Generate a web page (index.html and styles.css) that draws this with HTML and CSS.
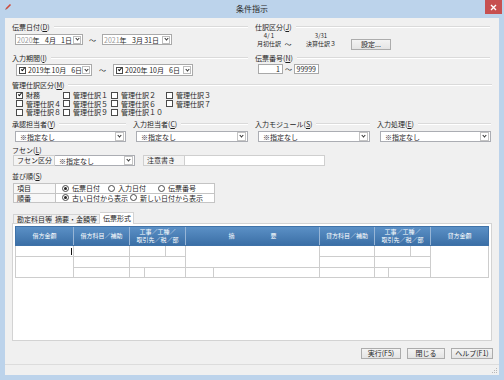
FILE: index.html
```html
<!DOCTYPE html>
<html lang="ja">
<head>
    <meta charset="UTF-8">
    <title>条件指示</title>
    <link rel="stylesheet" href="styles.css">
</head>
<body>
    <div class="window">
        <div class="titlebar">
            <span class="app-icon">
                <svg width="7" height="7" viewBox="0 0 7 7"><path d="M1 6 L5.5 1.5" stroke="#d04a3a" stroke-width="1.6"/><path d="M0.5 6.5 L1.5 5.5" stroke="#777" stroke-width="1"/></svg>
            </span>
            <span class="title">条件指示</span>
            <span class="close">
                <svg width="7" height="7" viewBox="0 0 7 7"><path d="M1 1 L6 6 M6 1 L1 6" stroke="#fff" stroke-width="1.4"/></svg>
            </span>
        </div>

        <div class="client">
            <div class="top">
                <div class="top-left">
                    <div class="glabel">伝票日付(<u>D</u>)</div>
                    <div class="date-row r1">
                        <div class="date w68">
                            <span class="dy gray">2020<b>年</b></span><span class="dm">4月</span><span class="dd">1日</span>
                            <span class="drop"><i class="chev"></i></span>
                        </div>
                        <span class="tilde t19">～</span>
                        <div class="date w70">
                            <span class="dy gray">2021<b>年</b></span><span class="dm">3月</span><span class="dd">31日</span>
                            <span class="drop"><i class="chev"></i></span>
                        </div>
                    </div>
                    <div class="glabel mt8">入力期間(<u>I</u>)</div>
                    <div class="date-row r2">
                        <div class="date w76 tall">
                            <span class="cb on"></span>
                            <span class="dy">2019年</span><span class="dm">10月</span><span class="dd">6日</span>
                            <span class="drop"><i class="chev"></i></span>
                        </div>
                        <span class="tilde t21">～</span>
                        <div class="date w80 tall">
                            <span class="cb on"></span>
                            <span class="dy">2020年</span><span class="dm">10月</span><span class="dd">6日</span>
                            <span class="drop"><i class="chev"></i></span>
                        </div>
                    </div>
                </div>

                <div class="top-right">
                    <div class="glabel">仕訳区分(<u>J</u>)</div>
                    <div class="kubun">
                        <div class="kb-col kb-a"><span>4/ 1</span><span>月初仕訳</span></div>
                        <span class="kb-tilde">～</span>
                        <div class="kb-col kb-b"><span>3/31</span><span>決算仕訳３</span></div>
                        <button class="btn set">設定...</button>
                    </div>
                    <div class="glabel mt4">伝票番号(<u>N</u>)</div>
                    <div class="num-row">
                        <span class="num">1</span>
                        <span class="tilde t11">～</span>
                        <span class="num">99999</span>
                    </div>
                </div>
            </div>

            <div class="glabel mt4">管理仕訳区分(<u>M</u>)</div>
            <div class="chk-grid">
                <label class="chk"><span class="cb on"></span>財務</label>
                <label class="chk"><span class="cb"></span>管理仕訳１</label>
                <label class="chk"><span class="cb"></span>管理仕訳２</label>
                <label class="chk"><span class="cb"></span>管理仕訳３</label>
                <label class="chk"><span class="cb"></span>管理仕訳４</label>
                <label class="chk"><span class="cb"></span>管理仕訳５</label>
                <label class="chk"><span class="cb"></span>管理仕訳６</label>
                <label class="chk"><span class="cb"></span>管理仕訳７</label>
                <label class="chk"><span class="cb"></span>管理仕訳８</label>
                <label class="chk"><span class="cb"></span>管理仕訳９</label>
                <label class="chk"><span class="cb"></span>管理仕訳１０</label>
            </div>

            <div class="sel-groups">
                <div class="sel-group">
                    <div class="glabel">承認担当者(<u>Y</u>)</div>
                    <div class="select">※指定なし<span class="arrow"><i class="chev"></i></span></div>
                </div>
                <div class="sel-group">
                    <div class="glabel">入力担当者(<u>C</u>)</div>
                    <div class="select">※指定なし<span class="arrow"><i class="chev"></i></span></div>
                </div>
                <div class="sel-group">
                    <div class="glabel">入力モジュール(<u>S</u>)</div>
                    <div class="select">※指定なし<span class="arrow"><i class="chev"></i></span></div>
                </div>
                <div class="sel-group">
                    <div class="glabel">入力処理(<u>E</u>)</div>
                    <div class="select">※指定なし<span class="arrow"><i class="chev"></i></span></div>
                </div>
            </div>

            <div class="glabel plain mt3">フセン(<u>L</u>)</div>
            <div class="fusen-row">
                <span class="cell-label">フセン区分</span>
                <div class="select fusen-sel">※指定なし<span class="arrow"><i class="chev"></i></span></div>
                <span class="cell-label note">注意書き</span>
                <span class="text-input"></span>
            </div>

            <div class="glabel plain mt5">並び順(<u>S</u>)</div>
            <div class="order">
                <div class="order-row">
                    <span class="order-label">項目</span>
                    <div class="order-opts">
                        <label class="opt o1"><span class="rd on"></span>伝票日付</label>
                        <label class="opt o2"><span class="rd"></span>入力日付</label>
                        <label class="opt"><span class="rd"></span>伝票番号</label>
                    </div>
                </div>
                <div class="order-row">
                    <span class="order-label">順番</span>
                    <div class="order-opts">
                        <label class="opt o3"><span class="rd on"></span>古い日付から表示</label>
                        <label class="opt"><span class="rd"></span>新しい日付から表示</label>
                    </div>
                </div>
            </div>

            <div class="tabs">
                <span class="tab t1">勘定科目等</span>
                <span class="tab t2">摘要・金額等</span>
                <span class="tab t3 active">伝票形式</span>
            </div>
            <div class="panel">
                <div class="grid-head">
                    <span class="hc">借方金額</span>
                    <span class="hc">借方科目／補助</span>
                    <span class="hc">工事／工種／<br>取引先／税／部</span>
                    <span class="hc memo"><span>摘</span><span>要</span></span>
                    <span class="hc">貸方科目／補助</span>
                    <span class="hc">工事／工種／<br>取引先／税／部</span>
                    <span class="hc">貸方金額</span>
                </div>
                <div class="grid-body">
                    <span class="bc caret-cell"><i class="caret"></i></span>
                    <span class="bc"></span>
                    <span class="split"><span class="bc s35"></span><span class="bc grow"></span></span>
                    <span class="bc span2"></span>
                    <span class="bc"></span>
                    <span class="split"><span class="bc s35"></span><span class="bc grow"></span></span>
                    <span class="bc span3"></span>

                    <span class="bc span2"></span>
                    <span class="bc"></span>
                    <span class="bc"></span>
                    <span class="bc"></span>
                    <span class="bc"></span>

                    <span class="bc"></span>
                    <span class="split"><span class="bc s14"></span><span class="bc grow"></span></span>
                    <span class="split"><span class="bc s27"></span><span class="bc grow"></span></span>
                    <span class="bc"></span>
                    <span class="split"><span class="bc s13"></span><span class="bc grow"></span></span>
                </div>
            </div>

            <div class="actions">
                <button class="btn run">実行(F5)</button>
                <button class="btn shut">閉じる</button>
                <button class="btn help">ヘルプ(F1)</button>
            </div>

            <div class="status">
                <svg class="grip" width="8" height="8" viewBox="0 0 8 8">
                    <rect x="6" y="2" width="1" height="1" fill="#b8b8b8"/>
                    <rect x="4" y="4" width="1" height="1" fill="#b8b8b8"/>
                    <rect x="6" y="4" width="1" height="1" fill="#b8b8b8"/>
                    <rect x="2" y="6" width="1" height="1" fill="#b8b8b8"/>
                    <rect x="4" y="6" width="1" height="1" fill="#b8b8b8"/>
                    <rect x="6" y="6" width="1" height="1" fill="#b8b8b8"/>
                </svg>
            </div>
        </div>
    </div>
</body>
</html>
```

FILE: styles.css
```css
body {
    margin: 0;
    font-family: "Noto Sans CJK JP", "Noto Sans", sans-serif;
    font-size: 7px;
    color: #1e1e1e;
}

.window {
    width: 504px;
    height: 380px;
    display: flex;
    flex-direction: column;
    background: #bcd3eb;
}

/* title bar */
.titlebar {
    height: 18px;
    display: grid;
    grid-template-columns: 1fr auto 1fr;
    align-items: start;
}

.app-icon {
    margin: 2px 0 0 5px;
    height: 7px;
}

.title {
    font-size: 8px;
    line-height: 17px;
    color: #2a2a2a;
}

.close {
    justify-self: end;
    width: 17px;
    height: 14px;
    margin-right: 2px;
    background: #c75050;
    display: flex;
    align-items: center;
    justify-content: center;
}

/* client area */
.client {
    flex: 1;
    margin: 0 5px 5px;
    padding: 4px 7px 0;
    background: #f0f0f0;
    display: flex;
    flex-direction: column;
}

u {
    text-decoration: underline;
}

.glabel {
    display: flex;
    align-items: center;
    height: 10px;
    line-height: 10px;
    white-space: nowrap;
}

.glabel::after {
    content: "";
    flex: 1;
    margin-left: 4px;
    border-top: 1px solid #dadada;
    border-bottom: 1px solid #fff;
}

.glabel.plain::after {
    display: none;
}

.mt3 { margin-top: 3px; }
.mt4 { margin-top: 4px; }
.mt5 { margin-top: 5px; }
.mt8 { margin-top: 8px; }

.chev {
    display: block;
    width: 2px;
    height: 2px;
    border-right: 1px solid #333;
    border-bottom: 1px solid #333;
    transform: rotate(45deg);
    margin-top: -2px;
}

.cb {
    width: 5px;
    height: 5px;
    border: 1px solid #4a4a4a;
    background: #fff;
    flex: none;
    display: inline-flex;
    justify-content: center;
}

.cb.on::after {
    content: "";
    width: 1px;
    height: 3px;
    border-right: 1px solid #111;
    border-bottom: 1px solid #111;
    transform: rotate(40deg);
    margin-top: -0.5px;
}

.rd {
    width: 5px;
    height: 5px;
    border: 1px solid #4a4a4a;
    border-radius: 50%;
    background: #fff;
    flex: none;
    display: inline-flex;
    align-items: center;
    justify-content: center;
}

.rd.on::after {
    content: "";
    width: 3px;
    height: 3px;
    border-radius: 50%;
    background: #222;
}

/* top section */
.top {
    display: flex;
    gap: 7px;
}

.top-left {
    width: 236px;
}

.top-right {
    width: 235px;
}

.date-row {
    display: flex;
    align-items: center;
}

.date-row.r1 {
    margin-top: 2px;
    padding-left: 3px;
}

.date-row.r2 {
    margin-top: 1px;
    padding-left: 4px;
}

.date {
    height: 11px;
    box-sizing: border-box;
    border: 1px solid #a9a9a9;
    background: #fff;
    display: flex;
    align-items: center;
    padding-left: 1px;
    white-space: nowrap;
}

.date.tall {
    height: 12px;
    padding-left: 2px;
}

.date.tall .cb {
    margin-right: 2px;
}

.w68 { width: 68px; }
.w70 { width: 70px; }
.w76 { width: 76px; }
.w80 { width: 80px; }

.dy { width: 24px; }
.dy.gray { color: #9a9a9a; }
.dy b { font-weight: normal; color: #1e1e1e; }
.dm { width: 15px; text-align: right; }
.dd { width: 16px; text-align: right; }

.drop {
    margin-left: auto;
    margin-right: 1px;
    width: 6px;
    height: 6px;
    border: 1px solid #bcbcbc;
    display: flex;
    align-items: center;
    justify-content: center;
}

.tilde {
    text-align: center;
}

.t19 { width: 19px; }
.t21 { width: 21px; }
.t11 { width: 11px; }

.kubun {
    display: flex;
    height: 17px;
    font-size: 6px;
}

.kb-col {
    display: flex;
    flex-direction: column;
    align-items: center;
    line-height: 8px;
    white-space: nowrap;
}

.kb-a {
    width: 26px;
    margin-left: 1px;
}

.kb-b {
    width: 34px;
    margin-left: 10px;
}

.kb-tilde {
    width: 12px;
    text-align: center;
    line-height: 8px;
    margin-top: 8px;
    font-size: 7px;
}

.btn {
    height: 11px;
    padding: 0;
    border: 1px solid #acacac;
    background: linear-gradient(#f3f3f3, #e4e4e4);
    font-family: inherit;
    font-size: 7px;
    line-height: 9px;
    color: #1e1e1e;
    white-space: nowrap;
}

.btn.set {
    width: 40px;
    margin: 7px 0 0 13px;
}

.num-row {
    display: flex;
    align-items: center;
    margin-top: 1px;
    padding-left: 3px;
}

.num {
    width: 25px;
    height: 10px;
    box-sizing: border-box;
    border: 1px solid #a9a9a9;
    background: #fff;
    text-align: right;
    padding-right: 2px;
    line-height: 8px;
}

/* 管理仕訳区分 */
.chk-grid {
    display: grid;
    grid-template-columns: 47px 48px 55px auto;
    grid-auto-rows: 8.5px;
    margin-top: 1px;
    padding-left: 4px;
}

.chk {
    display: flex;
    align-items: center;
    gap: 3px;
    white-space: nowrap;
}

/* select groups */
.sel-groups {
    display: grid;
    grid-template-columns: 114px 115px 115px 114px;
    gap: 7px;
    margin-top: 2.5px;
}

.select {
    height: 11px;
    box-sizing: border-box;
    border: 1px solid #abadb3;
    background: #fff;
    display: flex;
    align-items: center;
    padding-left: 4px;
    white-space: nowrap;
}

.sel-group .select {
    margin: 2px 0 0 3px;
}

.select .arrow {
    margin-left: auto;
    width: 7px;
    height: 7px;
    margin-right: 1px;
    border: 1px solid #c4c4c4;
    display: flex;
    align-items: center;
    justify-content: center;
}

/* フセン */
.fusen-row {
    display: flex;
    align-items: center;
    padding-left: 1px;
}

.cell-label {
    width: 42px;
    height: 11px;
    box-sizing: border-box;
    border: 1px solid #cfcfcf;
    background: #f4f4f4;
    padding-left: 3px;
    line-height: 9px;
    white-space: nowrap;
}

.fusen-sel {
    width: 80px;
    border-left: none;
}

.cell-label.note {
    margin-left: 8px;
}

.text-input {
    width: 140px;
    height: 11px;
    box-sizing: border-box;
    border: 1px solid #cfcfcf;
    border-left: none;
    background: #fff;
}

/* 並び順 */
.order {
    width: 200px;
    margin: 2px 0 0 1px;
    border: 1px solid #c4c4c4;
    border-bottom: none;
}

.order-row {
    display: flex;
    height: 8.5px;
    border-bottom: 1px solid #c4c4c4;
}

.order-label {
    width: 42px;
    box-sizing: border-box;
    padding-left: 3px;
    border-right: 1px solid #c4c4c4;
    background: #f7f7f7;
    line-height: 8.5px;
}

.order-opts {
    flex: 1;
    display: flex;
    align-items: center;
    padding-left: 6px;
    background: #fff;
}

.opt {
    display: flex;
    align-items: center;
    gap: 3px;
    white-space: nowrap;
}

.o1 { width: 46px; }
.o2 { width: 50px; }
.o3 { width: 68px; }

/* tabs */
.tabs {
    display: flex;
    align-items: flex-end;
    height: 11px;
    margin-top: 9px;
    padding-left: 1px;
}

.tab {
    height: 9px;
    box-sizing: border-box;
    border: 1px solid #d3d3d3;
    border-bottom: none;
    background: #f0f0f0;
    padding-left: 3px;
    line-height: 8px;
    white-space: nowrap;
}

.tab + .tab {
    border-left: none;
}

.t1 { width: 39px; }
.t2 { width: 48px; }
.t3 { width: 34px; }

.tab.active {
    height: 12px;
    margin-bottom: -1px;
    background: #fff;
    line-height: 10px;
    position: relative;
}

.panel {
    height: 118px;
    box-sizing: border-box;
    border: 1px solid #d3d3d3;
    background: #fff;
    padding: 2px;
}

.grid-head,
.grid-body {
    display: grid;
    grid-template-columns: 57px 55px 55px 133px 54px 55px 57px;
    gap: 1px;
    width: 474px;
    box-sizing: border-box;
}

.grid-head {
    height: 20px;
    background: #97b5d6;
    border: 1px solid #3f72a8;
}

.hc {
    background: linear-gradient(#5b90c6, #3b6fa6);
    color: #fff;
    font-size: 6px;
    line-height: 8px;
    display: flex;
    align-items: center;
    justify-content: center;
    text-align: center;
    white-space: nowrap;
}

.hc.memo {
    gap: 36px;
}

.grid-body {
    grid-template-rows: 10px 10px 9px;
    background: #cdcdcd;
    border: 1px solid #cdcdcd;
    border-top: none;
}

.bc {
    background: #fff;
}

.span2 { grid-row: span 2; }
.span3 { grid-row: span 3; }

.split {
    display: flex;
    gap: 1px;
    background: #cdcdcd;
}

.s35 { width: 35px; }
.s27 { width: 27px; }
.s14 { width: 14px; }
.s13 { width: 13px; }
.grow { flex: 1; }

.caret-cell {
    display: flex;
    align-items: center;
    justify-content: flex-end;
}

.caret {
    width: 1px;
    height: 7px;
    margin-right: 1px;
    background: #111;
}

/* buttons */
.actions {
    display: flex;
    justify-content: flex-end;
    gap: 6px;
    margin: 7px -1px 0 0;
}

.btn.run { width: 40px; }
.btn.shut { width: 38px; }
.btn.help { width: 42px; }

.status {
    margin: auto -7px 0;
    height: 10px;
    border-top: 1px solid #dcdcdc;
    display: flex;
    justify-content: flex-end;
    align-items: flex-end;
}

.grip {
    margin: 0 1px 1px 0;
}
```
